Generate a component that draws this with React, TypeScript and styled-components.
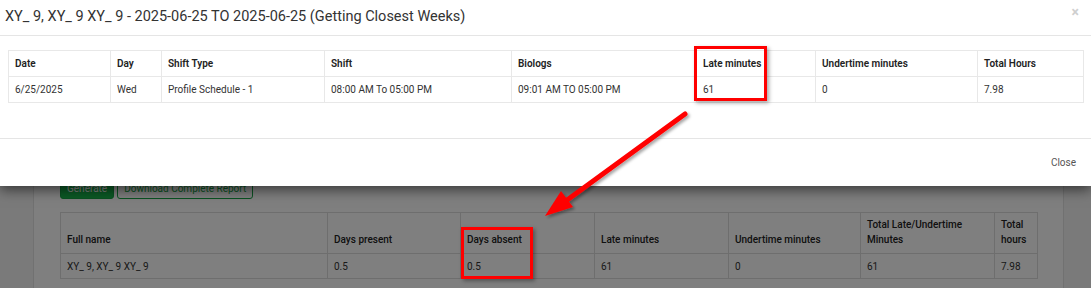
import styled, { createGlobalStyle } from 'styled-components';

const GlobalStyle = createGlobalStyle`
  html, body {
    margin: 0;
    padding: 0;
    background: #ffffff;
  }
  body {
    font-family: Roboto, "Noto Sans", "Liberation Sans", sans-serif;
    color: #333;
  }
`;

const Screen = styled.div`
  position: relative;
  width: 1091px;
  height: 288px;
  overflow: hidden;
`;

/* page behind the modal */
const Page = styled.div`
  display: flex;
  height: 288px;
`;

const Sidebar = styled.div`
  width: 33px;
  background: #f4f4f4;
  border-right: 1px solid #e2e2e2;
`;

const Main = styled.div`
  width: 976px;
  padding: 178px 27px 0 26px;
  background: #ffffff;
  border-right: 1px solid #e2e2e2;
`;

const RightStrip = styled.div`
  flex: 1;
  background: #f4f4f4;
`;

const ButtonRow = styled.div`
  display: flex;
  gap: 3px;
  margin-bottom: 13px;
`;

const ActionButton = styled.button<{ primary?: boolean }>`
  height: 21px;
  padding: 0 6px;
  border-radius: 3px;
  font-family: inherit;
  font-size: 10px;
  border: 1px solid #15a545;
  background: ${(p) => (p.primary ? '#16b44a' : '#ffffff')};
  color: ${(p) => (p.primary ? '#ffffff' : '#15a545')};
`;

const ReportTable = styled.table`
  border-collapse: collapse;
  table-layout: fixed;
  width: 977px;
  font-size: 10px;
  th,
  td {
    border: 1px solid #dddddd;
    text-align: left;
    padding: 0 6px;
  }
  th {
    height: 34px;
    vertical-align: bottom;
    padding-bottom: 6px;
    font-weight: 500;
    color: #222;
    line-height: 1.5;
  }
  td {
    height: 24px;
    color: #333;
  }
`;

const Backdrop = styled.div`
  position: absolute;
  inset: 0;
  background: rgba(0, 0, 0, 0.5);
`;

/* modal */
const Modal = styled.div`
  position: absolute;
  top: 0;
  left: 0;
  width: 1091px;
  background: #ffffff;
  box-shadow: 0 4px 12px rgba(0, 0, 0, 0.55);
`;

const ModalHeader = styled.div`
  display: flex;
  align-items: center;
  justify-content: space-between;
  height: 35px;
  padding: 0 12px 0 5px;
  border-bottom: 1px solid #e5e5e5;
`;

const Title = styled.h4`
  margin: 0 0 3px 0;
  font-size: 14.5px;
  font-weight: 400;
  color: #333;
`;

const CloseX = styled.span`
  font-size: 14px;
  font-weight: 700;
  color: #cfcfcf;
  margin-top: -12px;
`;

const ModalBody = styled.div`
  padding: 14px 8px 35px 8px;
`;

const ShiftTable = styled.table`
  border-collapse: collapse;
  table-layout: fixed;
  width: 1075px;
  font-size: 10px;
  th,
  td {
    border: 1px solid #e8e8e8;
    text-align: left;
    padding: 0 6px;
    height: 25px;
  }
  th {
    font-weight: 600;
    color: #222;
  }
  td {
    color: #333;
  }
`;

const ModalFooter = styled.div`
  display: flex;
  justify-content: flex-end;
  align-items: center;
  height: 47px;
  padding-right: 15px;
  border-top: 1px solid #e5e5e5;
`;

const LinkButton = styled.button`
  border: none;
  background: none;
  font-family: inherit;
  font-size: 10px;
  color: #555;
  padding: 0;
`;

/* annotations */
const Highlight = styled.div<{ x: number; y: number; w: number; h: number }>`
  position: absolute;
  left: ${(p) => p.x}px;
  top: ${(p) => p.y}px;
  width: ${(p) => p.w}px;
  height: ${(p) => p.h}px;
  box-sizing: border-box;
  border: 3px solid #ff0000;
  box-shadow: 2px 2px 4px rgba(0, 0, 0, 0.35);
`;

const ArrowLayer = styled.svg`
  position: absolute;
  left: 0;
  top: 0;
  pointer-events: none;
`;

const shiftCols = [102, 51, 163, 187, 185, 119, 162, 106];
const shiftHead = ['Date', 'Day', 'Shift Type', 'Shift', 'Biologs', 'Late minutes', 'Undertime minutes', 'Total Hours'];
const shiftRow = ['6/25/2025', 'Wed', 'Profile Schedule - 1', '08:00 AM To 05:00 PM', '09:01 AM TO 05:00 PM', '61', '0', '7.98'];

const reportCols = [267, 133, 134, 134, 132, 134, 43];
const reportHead = ['Full name', 'Days present', 'Days absent', 'Late minutes', 'Undertime minutes', 'Total Late/Undertime Minutes', 'Total hours'];
const reportRow = ['XY_ 9, XY_ 9 XY_ 9', '0.5', '0.5', '61', '0', '61', '7.98'];

export default function App() {
  return (
    <Screen>
      <GlobalStyle />
      <Page>
        <Sidebar />
        <Main>
          <ButtonRow>
            <ActionButton primary>Generate</ActionButton>
            <ActionButton>Download Complete Report</ActionButton>
          </ButtonRow>
          <ReportTable>
            <colgroup>
              {reportCols.map((w, i) => (
                <col key={i} style={{ width: w }} />
              ))}
            </colgroup>
            <thead>
              <tr>
                {reportHead.map((h) => (
                  <th key={h}>{h}</th>
                ))}
              </tr>
            </thead>
            <tbody>
              <tr>
                {reportRow.map((c, i) => (
                  <td key={i}>{c}</td>
                ))}
              </tr>
            </tbody>
          </ReportTable>
        </Main>
        <RightStrip />
      </Page>
      <Backdrop />

      <Modal>
        <ModalHeader>
          <Title>XY_ 9, XY_ 9 XY_ 9 - 2025-06-25 TO 2025-06-25 (Getting Closest Weeks)</Title>
          <CloseX>×</CloseX>
        </ModalHeader>
        <ModalBody>
          <ShiftTable>
            <colgroup>
              {shiftCols.map((w, i) => (
                <col key={i} style={{ width: w }} />
              ))}
            </colgroup>
            <thead>
              <tr>
                {shiftHead.map((h) => (
                  <th key={h}>{h}</th>
                ))}
              </tr>
            </thead>
            <tbody>
              <tr>
                {shiftRow.map((c, i) => (
                  <td key={i}>{c}</td>
                ))}
              </tr>
            </tbody>
          </ShiftTable>
        </ModalBody>
        <ModalFooter>
          <LinkButton>Close</LinkButton>
        </ModalFooter>
      </Modal>

      <Highlight x={694} y={46} w={73} h={55} />
      <Highlight x={461} y={227} w={72} h={52} />

      <ArrowLayer width="1091" height="288" viewBox="0 0 1091 288">
        <defs>
          <filter id="arrowShadow" x="-20%" y="-20%" width="140%" height="140%">
            <feDropShadow dx="2" dy="2" stdDeviation="1.5" floodColor="#000" floodOpacity="0.35" />
          </filter>
        </defs>
        <g filter="url(#arrowShadow)">
          <line x1="685" y1="114" x2="563" y2="203" stroke="#ff0000" strokeWidth="5" strokeLinecap="round" />
          <polygon points="545,216 561,191 573,207" fill="#ff0000" />
        </g>
      </ArrowLayer>
    </Screen>
  );
}
